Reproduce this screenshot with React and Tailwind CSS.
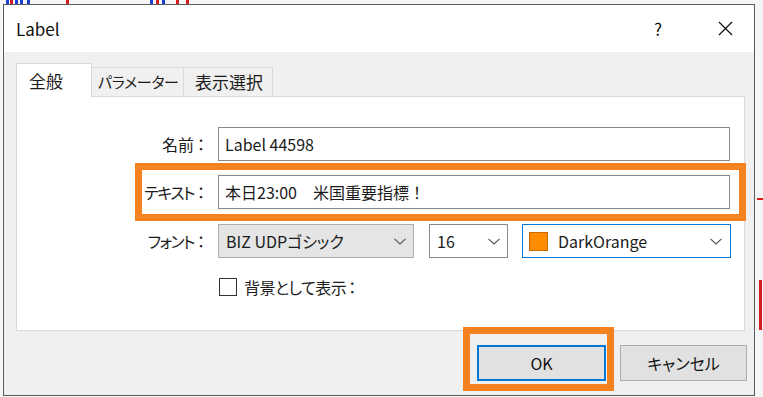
import React from 'react';

const Chevron = () => (
  <svg width="12" height="7" viewBox="0 0 12 7" className="shrink-0">
    <path d="M0.5 0.8 L6 6 L11.5 0.8" fill="none" stroke="#505050" strokeWidth="1.1" />
  </svg>
);

const Field = ({ children }) => (
  <div className="h-[34px] w-[512px] border border-[#8a8a8a] bg-white flex items-center pl-[6px]">
    {children}
  </div>
);

const Row = ({ label, labelClass = '', children }) => (
  <div className="flex items-center">
    <div className="w-[191px] text-right whitespace-nowrap">
      <span className={labelClass}>{label}</span>
      <span className="inline-block w-[14px] text-center">：</span>
    </div>
    <div className="ml-[10px]">{children}</div>
  </div>
);

// decorative chart bits visible around the dialog
const candles = [
  { left: 'left-[6px]', color: 'bg-[#1d3fd6]' },
  { left: 'left-[10px]', color: 'bg-[#d61d1d]' },
  { left: 'left-[15px]', color: 'bg-[#1d3fd6]' },
  { left: 'left-[20px]', color: 'bg-[#1d3fd6]' },
  { left: 'left-[27px]', color: 'bg-[#1d3fd6]' },
  { left: 'left-[66px]', color: 'bg-[#d61d1d]' },
  { left: 'left-[150px]', color: 'bg-[#1d3fd6]' },
  { left: 'left-[156px]', color: 'bg-[#d61d1d]' },
  { left: 'left-[162px]', color: 'bg-[#1d3fd6]' },
  { left: 'left-[176px]', color: 'bg-[#d61d1d]' },
  { left: 'left-[186px]', color: 'bg-[#d61d1d]' },
];

export default function App() {
  return (
    <div className="relative w-[763px] h-[397px] overflow-hidden bg-[#f6f6f6] pl-[3px] pt-[4px] font-['Noto_Sans_CJK_JP',sans-serif] text-[16px] text-[#1b1b1b] [font-feature-settings:'palt']">
      {candles.map((c, i) => (
        <div key={i} className={`absolute top-0 h-[5px] w-[3px] ${c.left} ${c.color}`} />
      ))}
      <div className="absolute right-0 top-[198px] h-[2px] w-[6px] bg-[#d61d1d]" />
      <div className="absolute right-[1px] top-[280px] h-[50px] w-[3px] bg-[#d61d1d]" />

      <div className="relative w-[752px] h-[392px] bg-[#f0f0f0] border border-[#5a5a5a] flex flex-col">
        {/* title bar */}
        <div className="h-[47px] bg-white flex items-center pl-[12px] pr-[21px] shrink-0">
          <span className="flex-1 text-[17px] text-[#111]">Label</span>
          <span className="text-[17px] text-[#111] leading-none">?</span>
          <svg width="15" height="15" viewBox="0 0 15 15" className="ml-[56px]">
            <path d="M1 1 L14 14 M14 1 L1 14" stroke="#111" strokeWidth="1.3" />
          </svg>
        </div>

        {/* body */}
        <div className="pl-[12px] pr-[9px] pt-[11px] flex flex-col">
          <div className="flex items-end h-[33px]">
            <div className="relative z-10 -mb-px h-[34px] w-[76px] bg-white border-x border-t border-[#d9d9d9] flex items-center pl-[12px] text-[17px]">
              全般
            </div>
            <div className="h-[29px] w-[92px] border-t border-r border-[#d9d9d9] flex items-center pl-[6px] text-[15px] tracking-[-0.3px]">
              パラメーター
            </div>
            <div className="h-[29px] w-[89px] border-t border-r border-[#d9d9d9] flex items-center pl-[11px] text-[17px]">
              表示選択
            </div>
          </div>

          {/* tab panel */}
          <div className="h-[235px] bg-white border border-[#d9d9d9] pt-[30px] flex flex-col">
            <Row label="名前">
              <Field>Label 44598</Field>
            </Row>

            <div className="mt-[14px]">
              <Row label="テキスト" labelClass="tracking-[-1.5px]">
                <div className="relative">
                  <Field>
                    <span className="[font-feature-settings:normal]">本日23:00　米国重要指標！</span>
                  </Field>
                  <div className="absolute -left-[83px] -right-[16px] -top-[12px] -bottom-[12px] border-[7px] border-[#f5821f]" />
                </div>
              </Row>
            </div>

            <div className="mt-[15px]">
              <Row label="フォント" labelClass="tracking-[-1.5px]">
                <div className="flex items-center">
                  <div className="h-[34px] w-[196px] border border-[#adadad] bg-[#e5e5e5] flex items-center pl-[7px] pr-[7px]">
                    <span className="flex-1">BIZ UDPゴシック</span>
                    <Chevron />
                  </div>
                  <div className="ml-[15px] h-[34px] w-[79px] border border-[#8a8a8a] bg-white flex items-center pl-[7px] pr-[7px]">
                    <span className="flex-1">16</span>
                    <Chevron />
                  </div>
                  <div className="ml-[14px] h-[34px] w-[209px] border border-[#0078d7] bg-white flex items-center pl-[6px] pr-[8px]">
                    <span className="w-[19px] h-[19px] bg-[#ff8c00] border border-[#c46c00] shrink-0" />
                    <span className="flex-1 ml-[10px]">DarkOrange</span>
                    <Chevron />
                  </div>
                </div>
              </Row>
            </div>

            <div className="mt-[17px] pl-[202px] flex items-center">
              <span className="w-[18px] h-[18px] border border-[#333] bg-white shrink-0" />
              <span className="ml-[7px] tracking-[-0.5px]">
                背景として表示<span className="inline-block w-[12px] text-center tracking-normal">：</span>
              </span>
            </div>
          </div>

          {/* buttons */}
          <div className="mt-[14px] flex justify-end -mr-[2px]">
            <div className="relative">
              <button className="h-[36px] w-[129px] bg-[#e1e1e1] border-2 border-[#0078d7] text-[16px] text-[#111]">
                OK
              </button>
              <div className="absolute -left-[14px] -right-[8px] -top-[18px] -bottom-[10px] border-[7px] border-[#f5821f] pointer-events-none" />
            </div>
            <button className="ml-[14px] h-[36px] w-[127px] bg-[#e1e1e1] border border-[#adadad] text-[16px] text-[#111]">
              キャンセル
            </button>
          </div>
        </div>
      </div>
    </div>
  );
}
